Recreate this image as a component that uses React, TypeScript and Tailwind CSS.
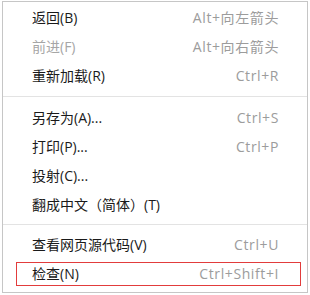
import React from "react";

type Item = {
  label: string;
  shortcut?: string;
  disabled?: boolean;
  highlight?: boolean;
};

const groups: Item[][] = [
  [
    { label: "返回(B)", shortcut: "Alt+向左箭头" },
    { label: "前进(F)", shortcut: "Alt+向右箭头", disabled: true },
    { label: "重新加载(R)", shortcut: "Ctrl+R" },
  ],
  [
    { label: "另存为(A)...", shortcut: "Ctrl+S" },
    { label: "打印(P)...", shortcut: "Ctrl+P" },
    { label: "投射(C)..." },
    { label: "翻成中文（简体）(T)" },
  ],
  [
    { label: "查看网页源代码(V)", shortcut: "Ctrl+U" },
    { label: "检查(N)", shortcut: "Ctrl+Shift+I", highlight: true },
  ],
];

function MenuRow({ item }: { item: Item }) {
  return (
    <div className="relative flex h-[29px] items-center justify-between pl-[29px] pr-[28px]">
      <span className={item.disabled ? "text-[#a6a6a6]" : "text-[#1a1a1a]"}>{item.label}</span>
      {item.shortcut ? <span className="tracking-[0.6px] text-[#9c9c9c]">{item.shortcut}</span> : null}
      {item.highlight ? (
        <div className="pointer-events-none absolute left-[13px] right-[6px] top-[3px] bottom-[2px] border border-[#e23c3c]" />
      ) : null}
    </div>
  );
}

export default function App() {
  return (
    <div className="h-[295px] w-[310px] bg-white pl-[2px] pt-[1px]">
      <div
        className="flex h-[292px] w-[306px] flex-col border border-[#c6c6c6] bg-white pt-[1px] text-[14px]"
        style={{ fontFamily: '"Open Sans", "Noto Sans CJK SC", sans-serif' }}
      >
        {groups.map((group, gi) => (
          <div key={gi}>
            {gi > 0 ? (
              <div className={gi === 1 ? "my-[6px] h-px bg-[#e3e3e3]" : "my-[5px] h-px bg-[#e3e3e3]"} />
            ) : null}
            {group.map((item) => (
              <MenuRow key={item.label} item={item} />
            ))}
          </div>
        ))}
      </div>
    </div>
  );
}
